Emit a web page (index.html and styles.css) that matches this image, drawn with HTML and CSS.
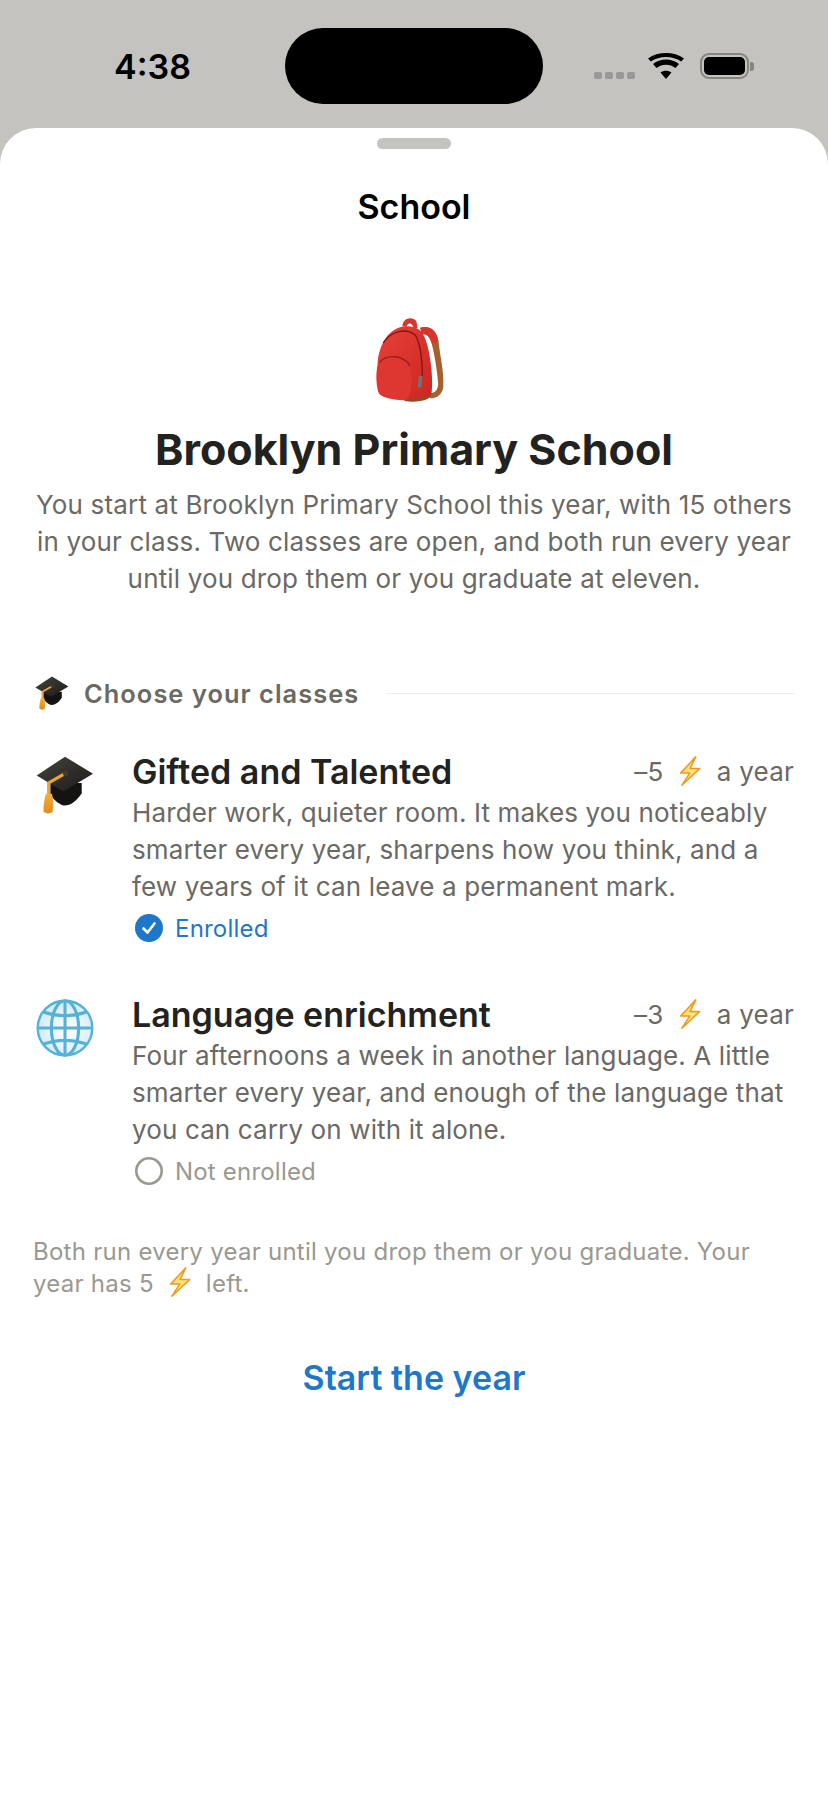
FILE: index.html
```html
<!DOCTYPE html>
<html lang="en">
<head>
    <meta charset="UTF-8">
    <meta name="viewport" content="width=device-width, initial-scale=1.0">
    <title>School</title>
    <link rel="stylesheet" href="styles.css">
</head>
<body>
    <svg class="sprites" aria-hidden="true">
        <defs>
            <linearGradient id="bag-red" x1="0" y1="0" x2="1" y2="1">
                <stop offset="0" stop-color="#e8403a"/>
                <stop offset="1" stop-color="#cc2621"/>
            </linearGradient>
            <linearGradient id="tassel-gold" x1="0" y1="0" x2="0" y2="1">
                <stop offset="0" stop-color="#f2b03a"/>
                <stop offset="1" stop-color="#e38a1d"/>
            </linearGradient>
            <linearGradient id="cap-board" x1="0" y1="0" x2="1" y2="1">
                <stop offset="0" stop-color="#45443f"/>
                <stop offset="1" stop-color="#1b1a18"/>
            </linearGradient>
            <radialGradient id="globe-fill" cx="0.55" cy="0.55" r="0.6">
                <stop offset="0" stop-color="#ffffff"/>
                <stop offset="1" stop-color="#cfe9f4"/>
            </radialGradient>
        </defs>

        <symbol id="backpack" viewBox="106 52 206 260">
            <path d="M186 78 C188 56 214 48 228 64 L232 86 L219 84 C215 70 204 66 198 82 Z" fill="#d8352f"/>
            <path d="M240 84 C270 76 292 96 296 130 C300 170 312 215 310 262 C308 285 292 298 270 298 L268 282 C285 284 296 270 294 250 C290 205 282 160 274 130 C268 108 258 102 244 104 Z" fill="#a5622f"/>
            <path d="M240 84 C270 76 290 92 295 125 L275 132 C268 108 258 102 244 104 Z" fill="#d8352f"/>
            <path d="M192 288 L270 278 L272 292 C262 306 226 312 192 306 Z" fill="#8f4c24"/>
            <path d="M195 80 C150 83 116 128 111 190 C106 240 108 280 128 292 C170 305 240 304 274 285 C282 240 268 110 237 90 C225 82 210 78 195 80 Z" fill="url(#bag-red)"/>
            <path d="M128 130 C150 95 200 82 226 108 C240 130 248 190 246 232" fill="none" stroke="#7d1714" stroke-width="4"/>
            <path d="M108 215 C110 180 150 166 175 170 C205 176 216 205 213 250 C213 280 206 300 190 304 C160 303 130 298 116 285 C108 270 106 240 108 215 Z" fill="#de3630"/>
            <path d="M116 190 C135 166 187 163 209 200" fill="none" stroke="#94201c" stroke-width="4"/>
            <rect x="234" y="230" width="11" height="36" rx="3" fill="#6d7478" transform="rotate(6 240 248)"/>
        </symbol>

        <symbol id="grad-cap" viewBox="48 293 170 170">
            <path d="M90 372 L182 372 L182 402 C167 425 147 440 128 438 C112 432 98 420 90 405 Z" fill="#141312"/>
            <path d="M133 295 L215 345 L128 397 L50 350 Z" fill="url(#cap-board)"/>
            <path d="M135 343 L85 372 L85 408" fill="none" stroke="#eda52e" stroke-width="9"/>
            <circle cx="135" cy="344" r="8" fill="#3c3b37"/>
            <path d="M77 404 L95 404 C99 425 99 445 96 458 C86 463 76 462 70 456 C69 440 72 422 77 404 Z" fill="url(#tassel-gold)"/>
        </symbol>

        <symbol id="globe" viewBox="50 58 170 170">
            <circle cx="135" cy="143" r="80" fill="url(#globe-fill)" stroke="#55b2d6" stroke-width="7"/>
            <g fill="none" stroke="#55b2d6" stroke-width="9">
                <ellipse cx="135" cy="143" rx="40" ry="80"/>
                <path d="M135 63 V223 M55 143 H215 M72 96 Q135 118 198 96 M72 190 Q135 168 198 190"/>
            </g>
        </symbol>

        <symbol id="bolt" viewBox="176 40 74 106">
            <path d="M232 46 L182 100 L212 100 L186 140 L245 85 L213 85 Z" fill="#ffe07a" stroke="#f09a1c" stroke-width="5" stroke-linejoin="round"/>
        </symbol>
    </svg>

    <div class="status-bar">
        <div class="status-time">4:38</div>
        <div class="island"></div>
        <div class="status-icons">
            <div class="signal"><span></span><span></span><span></span><span></span></div>
            <svg class="wifi" viewBox="0 0 36 26">
                <path d="M18 26 L12.5 19.5 C15.5 17 20.5 17 23.5 19.5 Z M8.5 15 L5 11 C12 5 24 5 31 11 L27.5 15 C22 10.5 14 10.5 8.5 15 Z M2.8 8.6 L0 5.4 C10 -1.800 26 -1.800 36 5.400 L33.200 8.600 C24.500 2.600 11.500 2.600 2.800 8.600 Z"/>
            </svg>
            <div class="battery"><div class="battery-level"></div></div>
            <div class="battery-nub"></div>
        </div>
    </div>

    <div class="sheet">
        <div class="handle"></div>
        <h2 class="sheet-title">School</h2>

        <div class="hero">
            <svg class="hero-icon"><use href="#backpack"/></svg>
            <h1>Brooklyn Primary School</h1>
            <p>You start at Brooklyn Primary School this year, with 15 others in your class. Two classes are open, and both run every year until you drop them or you graduate at eleven.</p>
        </div>

        <div class="section-head">
            <svg class="section-icon"><use href="#grad-cap"/></svg>
            <span>Choose your classes</span>
            <div class="section-line"></div>
        </div>

        <div class="class-row">
            <svg class="class-icon"><use href="#grad-cap"/></svg>
            <div class="class-info">
                <div class="class-top">
                    <h3>Gifted and Talented</h3>
                    <div class="cost">–5 <svg class="bolt"><use href="#bolt"/></svg> a year</div>
                </div>
                <p>Harder work, quieter room. It makes you noticeably smarter every year, sharpens how you think, and a few years of it can leave a permanent mark.</p>
                <div class="enroll on">
                    <svg viewBox="0 0 28 28"><circle cx="14" cy="14" r="14" fill="#1f77c9"/><path d="M8.500 14.500 L12.500 18.500 L19.500 9.500" fill="none" stroke="#fff" stroke-width="2.600" stroke-linecap="round" stroke-linejoin="round"/></svg>
                    Enrolled
                </div>
            </div>
        </div>

        <div class="class-row">
            <svg class="class-icon"><use href="#globe"/></svg>
            <div class="class-info">
                <div class="class-top">
                    <h3>Language enrichment</h3>
                    <div class="cost">–3 <svg class="bolt"><use href="#bolt"/></svg> a year</div>
                </div>
                <p>Four afternoons a week in another language. A little smarter every year, and enough of the language that you can carry on with it alone.</p>
                <div class="enroll">
                    <svg viewBox="0 0 28 28"><circle cx="14" cy="14" r="12.700" fill="none" stroke="#9a9890" stroke-width="2.600"/></svg>
                    Not enrolled
                </div>
            </div>
        </div>

        <p class="footnote">Both run every year until you drop them or you graduate. Your year has 5 <svg class="bolt"><use href="#bolt"/></svg> left.</p>

        <div class="start-btn">Start the year</div>
    </div>
</body>
</html>
```

FILE: styles.css
```css
body {
    font-family: 'Inter', 'Liberation Sans', sans-serif;
    margin: 0;
    padding: 0;
    width: 828px;
    height: 1800px;
    background-color: #c4c3c0;
    overflow: hidden;
}

/* holds the shared symbols and gradients, display:none would drop the gradients */
.sprites {
    position: absolute;
    width: 0;
    height: 0;
}

.status-bar {
    display: grid;
    grid-template-columns: 285px 258px 285px;
    align-items: center;
    height: 128px;
    padding-top: 4px;
    box-sizing: border-box;
    color: #000;
}

.status-time {
    text-align: center;
    padding-left: 20px;
    font-size: 34px;
    font-weight: 600;
}

.island {
    height: 76px;
    background-color: #000;
    border-radius: 38px;
}

.status-icons {
    display: flex;
    align-items: center;
    padding-left: 51px;
    height: 26px;
}

.signal {
    display: flex;
    gap: 3px;
    align-self: flex-end;
    margin-right: 13px;
}

.signal span {
    width: 8px;
    height: 7px;
    border-radius: 2px;
    background-color: #999896;
}

.wifi {
    width: 36px;
    height: 26px;
    margin-right: 16px;
}

.battery {
    width: 49px;
    height: 26px;
    box-sizing: border-box;
    border: 2px solid #85847f;
    border-radius: 9px;
    padding: 2px;
}

.battery-level {
    height: 100%;
    background-color: #000;
    border-radius: 5px;
}

.battery-nub {
    width: 4px;
    height: 9px;
    margin-left: 1px;
    background-color: #85847f;
    border-radius: 0 3px 3px 0;
}

.sheet {
    height: 1672px;
    background-color: #fff;
    border-radius: 36px 36px 0 0;
    padding: 10px 33px 0;
    box-sizing: border-box;
}

.handle {
    width: 74px;
    height: 11px;
    margin: 0 auto;
    background-color: #c4c3c2;
    border-radius: 6px;
}

.sheet-title {
    margin: 36px 0 0;
    text-align: center;
    font-size: 34px;
    line-height: 44px;
    font-weight: 600;
    color: #000;
}

.hero {
    display: flex;
    flex-direction: column;
    align-items: center;
    text-align: center;
    margin-top: 88px;
}

.hero-icon {
    width: 68px;
    height: 86px;
    margin-right: 9px;
}

.hero h1 {
    margin: 19px 0 0;
    font-size: 43px;
    line-height: 54px;
    font-weight: 700;
    color: #22221f;
}

.hero p {
    margin: 10px 0 0;
    font-size: 26px;
    letter-spacing: 0.16px;
    line-height: 37px;
    color: #6a6964;
}

.section-head {
    display: flex;
    align-items: center;
    margin-top: 79px;
    height: 34px;
}

.section-icon {
    width: 34px;
    height: 34px;
    margin: 0 15px 0 2px;
}

.section-head span {
    font-size: 25.4px;
    font-weight: 600;
    letter-spacing: 1.05px;
    color: #6b6a62;
}

.section-line {
    flex: 1;
    height: 1px;
    margin-left: 27px;
    background-color: #eeeeec;
}

.class-row {
    display: flex;
    margin-top: 41px;
}

.class-row + .class-row {
    margin-top: 49px;
}

.class-icon {
    flex: none;
    width: 58px;
    height: 58px;
    margin: 5px 38px 0 3px;
}

.class-info {
    flex: 1;
}

.class-top {
    display: flex;
    justify-content: space-between;
    align-items: center;
    height: 40px;
}

.class-top h3 {
    margin: 0;
    font-size: 34px;
    font-weight: 600;
    color: #22221f;
}

.cost {
    font-size: 26px;
    letter-spacing: 0.24px;
    color: #6a6964;
    white-space: nowrap;
    padding-right: 1px;
}

/* negative margins so the bolt doesn't stretch the line it sits in */
.bolt {
    width: 26px;
    height: 32px;
    vertical-align: 0;
    margin: -6px 6px;
}

.class-info p {
    margin: 3px 0 0;
    font-size: 26px;
    letter-spacing: 0.13px;
    line-height: 37px;
    color: #6a6964;
}

.enroll {
    display: flex;
    align-items: center;
    gap: 12px;
    margin-top: 6px;
    height: 34px;
    font-size: 24px;
    letter-spacing: 0.2px;
    color: #9a9890;
}

.enroll svg {
    width: 28px;
    height: 28px;
    margin-left: 3px;
}

.enroll.on {
    color: #1f77c9;
}

.footnote {
    margin: 48px 0 0;
    font-size: 24px;
    letter-spacing: 0.26px;
    line-height: 32px;
    color: #9a9890;
}

.start-btn {
    margin-top: 57px;
    text-align: center;
    font-size: 34px;
    font-weight: 600;
    color: #1f77c9;
}
```
